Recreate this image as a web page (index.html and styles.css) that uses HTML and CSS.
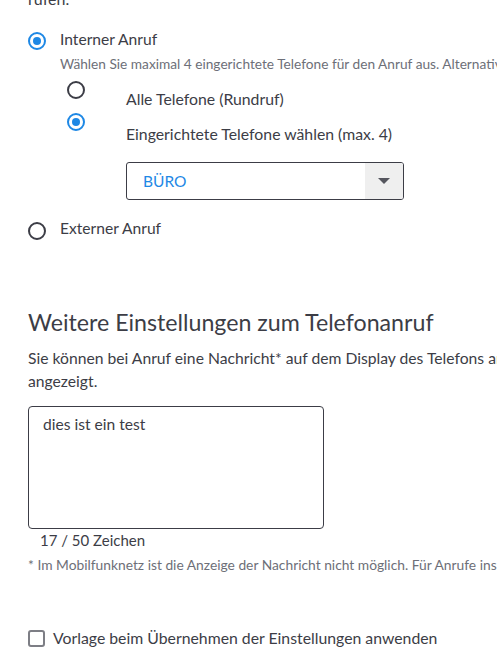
FILE: index.html
```html
<!DOCTYPE html>
<html lang="de">
<head>
<meta charset="utf-8">
<link rel="stylesheet" href="styles.css">
</head>
<body>
<div class="page">
  <p class="intro">rufen.</p>

  <div class="opt opt-int">
    <span class="radio checked"></span>
    <span class="opt-label">Interner Anruf</span>
  </div>
  <p class="help">Wählen Sie maximal 4 eingerichtete Telefone für den Anruf aus. Alternativ können Sie alle Telefone anrufen.</p>

  <div class="sub">
    <div class="sub-row sub-all">
      <span class="radio"></span>
      <span class="sub-label">Alle Telefone (Rundruf)</span>
    </div>
    <div class="sub-row sub-sel">
      <span class="radio checked"></span>
      <span class="sub-label">Eingerichtete Telefone wählen (max. 4)</span>
    </div>
    <div class="select">
      <span class="select-value">BÜRO</span>
      <span class="select-btn"><span class="caret"></span></span>
    </div>
  </div>

  <div class="opt opt-ext">
    <span class="radio"></span>
    <span class="opt-label">Externer Anruf</span>
  </div>

  <h2 class="heading">Weitere Einstellungen zum Telefonanruf</h2>
  <p class="desc">Sie können bei Anruf eine Nachricht* auf dem Display des Telefons anzeigen lassen. Die Nachricht wird beim Anruf<br>angezeigt.</p>

  <div class="textarea">dies ist ein test</div>
  <div class="counter">17 / 50 Zeichen</div>
  <p class="note">* Im Mobilfunknetz ist die Anzeige der Nachricht nicht möglich. Für Anrufe ins Festnetz wird die Nachricht angezeigt.</p>

  <label class="check">
    <span class="box"></span>
    <span class="check-label">Vorlage beim Übernehmen der Einstellungen anwenden</span>
  </label>
</div>
</body>
</html>
```

FILE: styles.css
```css
html, body {
  margin: 0;
  padding: 0;
  background: #fff;
  overflow: hidden;
}
body {
  font-family: Lato, "Open Sans", sans-serif;
  color: #3c3d46;
  width: 497px;
  height: 671px;
}
.page {
  padding-left: 28px;
  white-space: nowrap;
}
p { margin: 0; }

.intro {
  font-size: 16px;
  line-height: 20px;
  margin-top: -11px;
}

.radio {
  box-sizing: border-box;
  width: 18px;
  height: 18px;
  border: 2px solid #3c3d46;
  border-radius: 50%;
  flex: none;
  display: flex;
  align-items: center;
  justify-content: center;
}
.radio.checked {
  border-color: #1e88e5;
}
.radio.checked::after {
  content: "";
  width: 8px;
  height: 8px;
  border-radius: 50%;
  background: #1e88e5;
}

.opt {
  display: flex;
  align-items: flex-start;
  gap: 14px;
}
.opt .radio { margin-top: 3px; }
.opt-label {
  font-size: 15.6px;
  line-height: 20px;
}
.opt-int { margin-top: 20px; }

.help {
  margin: 5px 0 0 32px;
  font-size: 13.7px;
  line-height: 18px;
  color: #6d6f78;
}

.sub {
  margin-left: 39px;
  padding-top: 8px;
}
.sub-row {
  display: flex;
  align-items: flex-start;
  gap: 41px;
}
.sub-label {
  font-size: 15.8px;
  line-height: 20px;
}
.sub-all { height: 32px; }
.sub-all .sub-label { margin-top: 8px; }
.sub-sel .sub-label { margin-top: 11px; }

.select {
  box-sizing: border-box;
  margin: 18px 0 0 59px;
  width: 278px;
  height: 38px;
  border: 1px solid #3c3d46;
  border-radius: 3px;
  display: flex;
  align-items: stretch;
  overflow: hidden;
}
.select-value {
  flex: 1;
  padding-left: 16px;
  font-size: 15.5px;
  line-height: 36px;
  color: #1e88e5;
}
.select-btn {
  width: 38px;
  background: #efefef;
  display: flex;
  align-items: center;
  justify-content: center;
}
.caret {
  width: 0;
  height: 0;
  border-left: 6px solid transparent;
  border-right: 6px solid transparent;
  border-top: 6px solid #55565e;
}

.opt-ext { margin-top: 18px; }
.opt-ext .radio { margin-top: 4px; }

.heading {
  margin: 67px 0 0;
  font-weight: 400;
  font-size: 23.2px;
  line-height: 30px;
}

.desc {
  margin-top: 10px;
  font-size: 15.7px;
  line-height: 23px;
}

.textarea {
  box-sizing: border-box;
  margin-top: 13px;
  width: 296px;
  height: 123px;
  border: 1px solid #3c3d46;
  border-radius: 4px;
  padding: 7px 14px;
  font-size: 15.6px;
  line-height: 20px;
}
.counter {
  margin: 1px 0 0 12px;
  font-size: 15px;
  line-height: 20px;
}
.note {
  margin-top: 7px;
  font-size: 13.8px;
  line-height: 16px;
  color: #6d6f78;
}

.check {
  margin-top: 55px;
  display: flex;
  align-items: center;
  gap: 8px;
}
.box {
  box-sizing: border-box;
  width: 17px;
  height: 17px;
  border: 2px solid #7d7e85;
  border-radius: 3px;
  flex: none;
}
.check-label {
  font-size: 15.8px;
  line-height: 20px;
}
```
